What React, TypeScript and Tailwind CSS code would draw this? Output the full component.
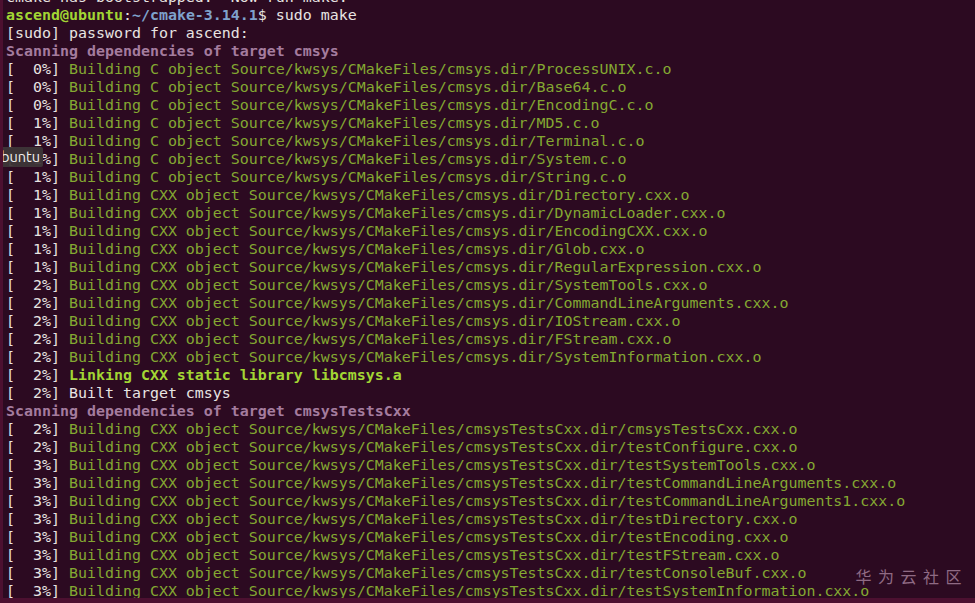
import React from "react";

type Seg = { t: string; c: string; b?: boolean };

const W = "text-[#e8e4e2]";
const G = "text-[#84a832]";
const BG = "text-[#a2d634]";
const P = "text-[#a47c9e]";
const BL = "text-[#7fa2cc]";

const build = (pct: string, kind: string, path: string): Seg[] => [
  { t: `[${pct}] `, c: W },
  { t: `Building ${kind} object ${path}`, c: G },
];

const cObjs: [string, string][] = [
  ["  0%", "ProcessUNIX.c.o"],
  ["  0%", "Base64.c.o"],
  ["  0%", "EncodingC.c.o"],
  ["  1%", "MD5.c.o"],
  ["  1%", "Terminal.c.o"],
  ["  1%", "System.c.o"],
  ["  1%", "String.c.o"],
];
const cxxObjs: [string, string][] = [
  ["  1%", "Directory.cxx.o"],
  ["  1%", "DynamicLoader.cxx.o"],
  ["  1%", "EncodingCXX.cxx.o"],
  ["  1%", "Glob.cxx.o"],
  ["  1%", "RegularExpression.cxx.o"],
  ["  2%", "SystemTools.cxx.o"],
  ["  2%", "CommandLineArguments.cxx.o"],
  ["  2%", "IOStream.cxx.o"],
  ["  2%", "FStream.cxx.o"],
  ["  2%", "SystemInformation.cxx.o"],
];
const testObjs: [string, string][] = [
  ["  2%", "cmsysTestsCxx.cxx.o"],
  ["  2%", "testConfigure.cxx.o"],
  ["  3%", "testSystemTools.cxx.o"],
  ["  3%", "testCommandLineArguments.cxx.o"],
  ["  3%", "testCommandLineArguments1.cxx.o"],
  ["  3%", "testDirectory.cxx.o"],
  ["  3%", "testEncoding.cxx.o"],
  ["  3%", "testFStream.cxx.o"],
  ["  3%", "testConsoleBuf.cxx.o"],
  ["  3%", "testSystemInformation.cxx.o"],
];

const lines: Seg[][] = [
  [{ t: "cmake has bootstrapped.  Now run make.", c: W }],
  [
    { t: "ascend@ubuntu", c: BG, b: true },
    { t: ":", c: W },
    { t: "~/cmake-3.14.1", c: BL, b: true },
    { t: "$ sudo make", c: W },
  ],
  [{ t: "[sudo] password for ascend:", c: W }],
  [{ t: "Scanning dependencies of target cmsys", c: P, b: true }],
  ...cObjs.map(([p, f]) => build(p, "C", `Source/kwsys/CMakeFiles/cmsys.dir/${f}`)),
  ...cxxObjs.map(([p, f]) => build(p, "CXX", `Source/kwsys/CMakeFiles/cmsys.dir/${f}`)),
  [
    { t: "[  2%] ", c: W },
    { t: "Linking CXX static library libcmsys.a", c: BG, b: true },
  ],
  [{ t: "[  2%] Built target cmsys", c: W }],
  [{ t: "Scanning dependencies of target cmsysTestsCxx", c: P, b: true }],
  ...testObjs.map(([p, f]) =>
    build(p, "CXX", `Source/kwsys/CMakeFiles/cmsysTestsCxx.dir/${f}`)
  ),
];

export default function App() {
  return (
    <div className="relative w-[975px] h-[603px] overflow-hidden bg-[#2c0a21] border-l-[3px] border-b-[5px] border-[#4c1030]">
      <div
        className="mt-[-12px] pl-[3px] text-[14.95px] leading-[18px] whitespace-pre"
        style={{ fontFamily: '"DejaVu Sans Mono", "Liberation Mono", monospace' }}
      >
        {lines.map((segs, i) => (
          <div key={i} className="h-[18px]">
            {segs.map((s, j) => (
              <span key={j} className={`${s.c} ${s.b ? "font-bold" : "font-normal"}`}>
                {s.t}
              </span>
            ))}
          </div>
        ))}
      </div>

      <div
        className="absolute left-[-3px] top-[147px] h-[20px] w-[43px] bg-[#3d3638]/95 rounded-r-[2px] overflow-hidden"
        style={{ fontFamily: '"Ubuntu", "Noto Sans", sans-serif' }}
      >
        <span className="absolute right-[3px] top-[1px] text-[14.5px] leading-[18px] text-[#f2f0ef]">
          Ubuntu
        </span>
      </div>

      <div
        className="absolute right-[7px] bottom-[12px] text-[16px] leading-[20px] tracking-[6.5px] text-[#8f6a84]"
        style={{ fontFamily: '"Noto Sans CJK SC", sans-serif' }}
      >
        华为云社区
      </div>
    </div>
  );
}
